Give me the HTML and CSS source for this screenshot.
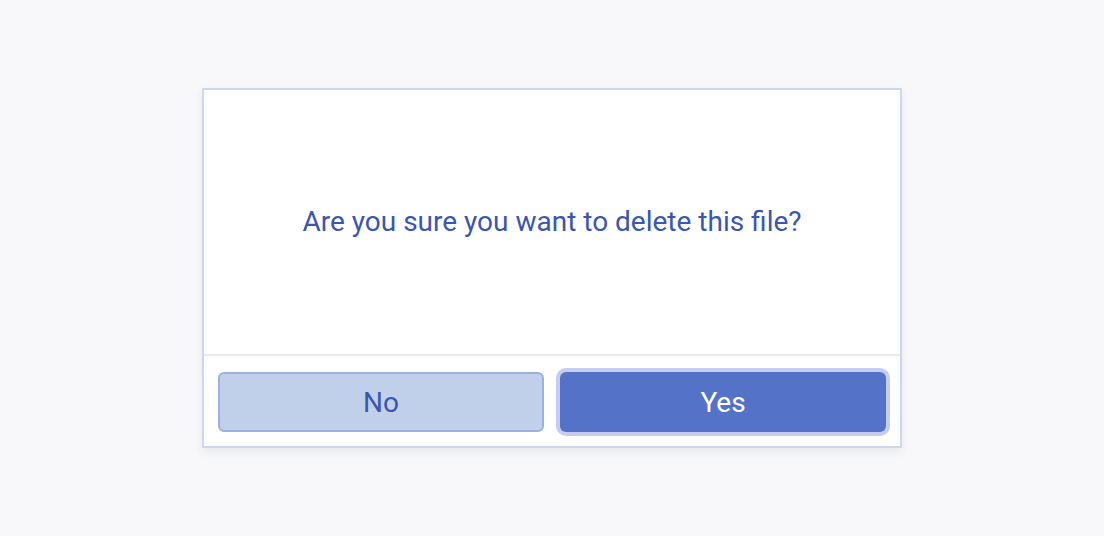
FILE: index.html
```html
<!DOCTYPE html>
<html>
<head>
<meta charset="utf-8">
<link rel="stylesheet" href="styles.css">
</head>
<body>
<div class="page">
  <div class="dialog">
    <div class="dialog-body">
      <p class="message">Are you sure you want to delete this file?</p>
    </div>
    <div class="dialog-footer">
      <button class="btn btn-no">No</button>
      <button class="btn btn-yes">Yes</button>
    </div>
  </div>
</div>
</body>
</html>
```
FILE: styles.css
```css
html, body {
  margin: 0;
  padding: 0;
  background: #f8f8fa;
  font-family: Roboto, "Liberation Sans", sans-serif;
}
.page {
  height: 536px;
  display: flex;
  justify-content: center;
  padding-top: 88px;
  box-sizing: border-box;
}
.dialog {
  width: 700px;
  height: 360px;
  box-sizing: border-box;
  background: #ffffff;
  border: 2px solid #d0d6ec;
  box-shadow: 0 4px 8px rgba(40, 50, 90, 0.08);
  display: flex;
  flex-direction: column;
}
.dialog-body {
  flex: 1;
  display: flex;
  align-items: center;
  justify-content: center;
  border-bottom: 2px solid #e9eaee;
}
.message {
  margin: 0;
  font-size: 28px;
  color: #3a55b2;
  padding-bottom: 2px;
}
.dialog-footer {
  display: grid;
  grid-template-columns: 1fr 1fr;
  gap: 16px;
  padding: 16px 14px 14px 14px;
  height: 90px;
  box-sizing: border-box;
}
.btn {
  font-family: Roboto, "Liberation Sans", sans-serif;
  font-size: 28px;
  border-radius: 6px;
  height: 60px;
  cursor: pointer;
  padding: 2px 0 0 0;
  line-height: 1;
}
.btn-no {
  background: #c0d0eb;
  border: 2px solid #9eb1dc;
  color: #3a55b2;
}
.btn-yes {
  background: #5473c8;
  border: none;
  color: #ffffff;
  box-shadow: 0 0 0 4px #c5cdf0;
}
```
